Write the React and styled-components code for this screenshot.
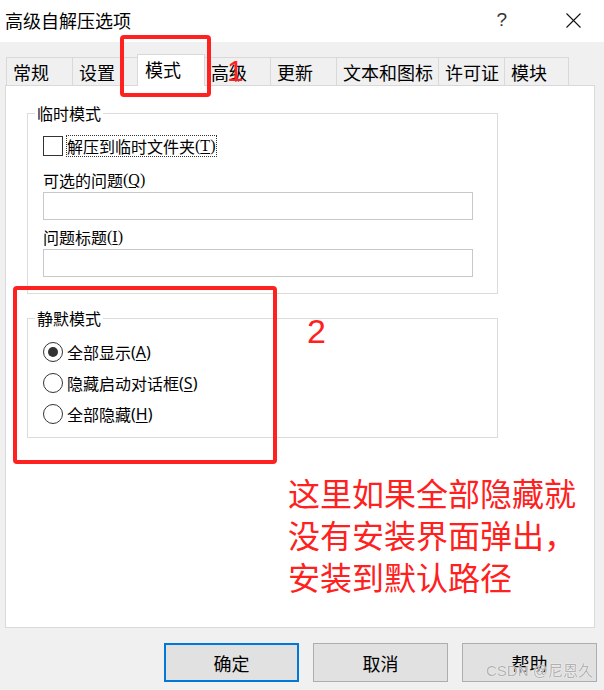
import styled, { createGlobalStyle } from "styled-components";

const GlobalStyle = createGlobalStyle`
  html, body {
    margin: 0;
    padding: 0;
    background: #f0f0f0;
  }
  body {
    font-family: "Noto Sans CJK SC", "Noto Sans", sans-serif;
    color: #000;
  }
`;

const Window = styled.div`
  position: relative;
  width: 604px;
  height: 690px;
  overflow: hidden;
  background: #f0f0f0;
  display: flex;
  flex-direction: column;
`;

const TitleBar = styled.div`
  height: 42px;
  flex-shrink: 0;
  background: #fff;
  display: flex;
  align-items: center;
  padding: 0 0 2px 5px;
  box-sizing: border-box;
`;

const Title = styled.div`
  flex: 1;
  font-size: 18px;
  line-height: 24px;
`;

const HelpMark = styled.span`
  font-family: "Liberation Sans", sans-serif;
  font-size: 19px;
  font-weight: 300;
  color: #333;
  line-height: 24px;
`;

const CloseIcon = styled.svg`
  width: 15px;
  height: 15px;
  margin: 0 23px 0 59px;
`;

const Body = styled.div`
  padding: 12px 9px 0 5px;
  display: flex;
  flex-direction: column;
`;

const TabStrip = styled.div`
  display: flex;
  align-items: flex-end;
  height: 32px;
  padding-left: 1px;
  margin-bottom: -1px;
  position: relative;
  z-index: 1;
`;

const Tab = styled.div`
  box-sizing: border-box;
  width: ${(p) => p.$w + 1}px;
  height: ${(p) => (p.$active ? 32 : 28)}px;
  margin-right: -1px;
  margin-bottom: ${(p) => (p.$active ? 0 : 1)}px;
  border: 1px solid #d9d9d9;
  border-bottom: none;
  background: ${(p) => (p.$active ? "#fff" : "#f0f0f0")};
  position: relative;
  z-index: ${(p) => (p.$active ? 2 : 1)};
  display: flex;
  align-items: center;
  padding: 0 0 ${(p) => (p.$active ? 3 : 0)}px ${(p) => (p.$active ? 7 : 6)}px;
  font-size: 18px;
  line-height: 24px;
  white-space: nowrap;
`;

const Panel = styled.div`
  height: 543px;
  box-sizing: border-box;
  background: #fff;
  border: 1px solid #d9d9d9;
  padding: 16px 0 0 21px;
  display: flex;
  flex-direction: column;
`;

const Group = styled.fieldset`
  margin: ${(p) => p.$top || 0}px 0 0 0;
  width: 471px;
  min-width: 0;
  box-sizing: border-box;
  border: 1px solid #dcdcdc;
  padding: 0 7px ${(p) => p.$bottom}px 7px;
`;

const Legend = styled.legend`
  padding: 0 2px;
  font-size: 16px;
  line-height: 22px;
  height: 22px;
`;

const GroupContent = styled.div`
  padding-left: 8px;
  display: flex;
  flex-direction: column;
  align-items: flex-start;
`;

const CheckRow = styled.div`
  margin-top: 11px;
  height: 22px;
  display: flex;
  align-items: center;
`;

const CheckBox = styled.span`
  width: 20px;
  height: 20px;
  box-sizing: border-box;
  border: 1px solid #333;
  background: #fff;
  margin-right: 3px;
`;

const FocusLabel = styled.span`
  display: flex;
  align-items: center;
  height: 22px;
  box-sizing: border-box;
  border: 1px dotted #333;
  padding: 0 1px 0 0;
  font-size: 16px;
`;

const FieldLabel = styled.div`
  margin-top: ${(p) => p.$top}px;
  height: 22px;
  display: flex;
  align-items: center;
  font-size: 16px;
`;

const TextInput = styled.input`
  display: block;
  width: 430px;
  height: 28px;
  box-sizing: border-box;
  margin: 1px 0 0 0;
  padding: 0 4px;
  border: 1px solid #c8c8c8;
  background: #fff;
  outline: none;
  font: inherit;
`;

const Hotkey = styled.span`
  font-family: ${(p) =>
    p.$serif ? '"Liberation Serif", serif' : '"Noto Sans", sans-serif'};
  font-size: 16px;
  line-height: 20px;

  u {
    text-decoration: underline;
    text-underline-offset: 2px;
  }
`;

const RadioRow = styled.div`
  margin-top: ${(p) => p.$top}px;
  height: 22px;
  display: flex;
  align-items: center;
  font-size: 16px;
`;

const RadioCircle = styled.span`
  width: 20px;
  height: 20px;
  box-sizing: border-box;
  border: 1px solid #333;
  border-radius: 50%;
  background: #fff;
  margin-right: 4px;
  display: flex;
  align-items: center;
  justify-content: center;

  &::after {
    content: "";
    display: ${(p) => (p.$checked ? "block" : "none")};
    width: 10px;
    height: 10px;
    border-radius: 50%;
    background: #333;
  }
`;

const ButtonRow = styled.div`
  margin-top: 15px;
  padding-right: 7px;
  display: flex;
  justify-content: flex-end;
  gap: 14px;
`;

const Button = styled.button`
  width: 135px;
  height: 39px;
  box-sizing: border-box;
  background: #e1e1e1;
  border: ${(p) => (p.$primary ? "2px solid #0078d7" : "1px solid #adadad")};
  font-family: inherit;
  font-size: 18px;
  color: #000;
  padding: 0;
`;

const Watermark = styled.div`
  position: absolute;
  left: 486px;
  top: 661px;
  font-family: "Liberation Sans", "Noto Sans CJK SC", sans-serif;
  font-size: 15px;
  line-height: 20px;
  color: rgba(110, 110, 110, 0.55);
  text-shadow: 0 0 1px #fff, 0 0 1px #fff;
  pointer-events: none;
`;

const Highlight = styled.div`
  position: absolute;
  left: ${(p) => p.$x}px;
  top: ${(p) => p.$y}px;
  width: ${(p) => p.$w}px;
  height: ${(p) => p.$h}px;
  box-sizing: border-box;
  border: 4px solid #ff2020;
  border-radius: 4px;
  z-index: 5;
`;

const Marker = styled.div`
  position: absolute;
  left: ${(p) => p.$x}px;
  top: ${(p) => p.$y}px;
  font-family: "Liberation Sans", sans-serif;
  font-size: ${(p) => p.$size}px;
  line-height: 1;
  color: #ff2020;
  z-index: 5;
`;

const Note = styled.div`
  position: absolute;
  left: 288px;
  top: 471px;
  font-family: "Noto Sans CJK SC", sans-serif;
  font-size: 32px;
  line-height: 42px;
  color: #ff2020;
  z-index: 5;
`;

const tabs = [
  { label: "常规", w: 66 },
  { label: "设置", w: 65 },
  { label: "模式", w: 67, active: true },
  { label: "高级", w: 66 },
  { label: "更新", w: 66 },
  { label: "文本和图标", w: 102 },
  { label: "许可证", w: 66 },
  { label: "模块", w: 64 },
];

const radios = [
  { text: "全部显示", key: "A", checked: true, top: 12 },
  { text: "隐藏启动对话框", key: "S", top: 9 },
  { text: "全部隐藏", key: "H", top: 9 },
];

export default function App() {
  return (
    <>
      <GlobalStyle />
      <Window>
        <TitleBar>
          <Title>高级自解压选项</Title>
          <HelpMark>?</HelpMark>
          <CloseIcon viewBox="0 0 15 15">
            <path d="M0.5 0.5 L14.5 14.5 M14.5 0.5 L0.5 14.5" stroke="#111" strokeWidth="1.1" fill="none" />
          </CloseIcon>
        </TitleBar>

        <Body>
          <TabStrip>
            {tabs.map((t) => (
              <Tab key={t.label} $w={t.w} $active={t.active}>
                {t.label}
              </Tab>
            ))}
          </TabStrip>

          <Panel>
            <Group $bottom={16}>
              <Legend>临时模式</Legend>
              <GroupContent>
                <CheckRow>
                  <CheckBox />
                  <FocusLabel>
                    解压到临时文件夹
                    <Hotkey $serif>
                      (<u>T</u>)
                    </Hotkey>
                  </FocusLabel>
                </CheckRow>
                <FieldLabel $top={12}>
                  可选的问题
                  <Hotkey $serif>
                    (<u>Q</u>)
                  </Hotkey>
                </FieldLabel>
                <TextInput />
                <FieldLabel $top={6}>
                  问题标题
                  <Hotkey $serif>
                    (<u>I</u>)
                  </Hotkey>
                </FieldLabel>
                <TextInput />
              </GroupContent>
            </Group>

            <Group $top={13} $bottom={12}>
              <Legend>静默模式</Legend>
              <GroupContent>
                {radios.map((r) => (
                  <RadioRow key={r.key} $top={r.top}>
                    <RadioCircle $checked={r.checked} />
                    {r.text}
                    <Hotkey>
                      (<u>{r.key}</u>)
                    </Hotkey>
                  </RadioRow>
                ))}
              </GroupContent>
            </Group>
          </Panel>
        </Body>

        <ButtonRow>
          <Button $primary>确定</Button>
          <Button>取消</Button>
          <Button>帮助</Button>
        </ButtonRow>

        <Watermark>CSDN @尼恩久</Watermark>

        <Highlight $x={120} $y={35} $w={91} $h={62} />
        <Marker $x={227} $y={56} $size={30}>1</Marker>
        <Highlight $x={13} $y={286} $w={264} $h={178} />
        <Marker $x={307} $y={314} $size={34}>2</Marker>
        <Note>
          这里如果全部隐藏就
          <br />
          没有安装界面弹出，
          <br />
          安装到默认路径
        </Note>
      </Window>
    </>
  );
}
